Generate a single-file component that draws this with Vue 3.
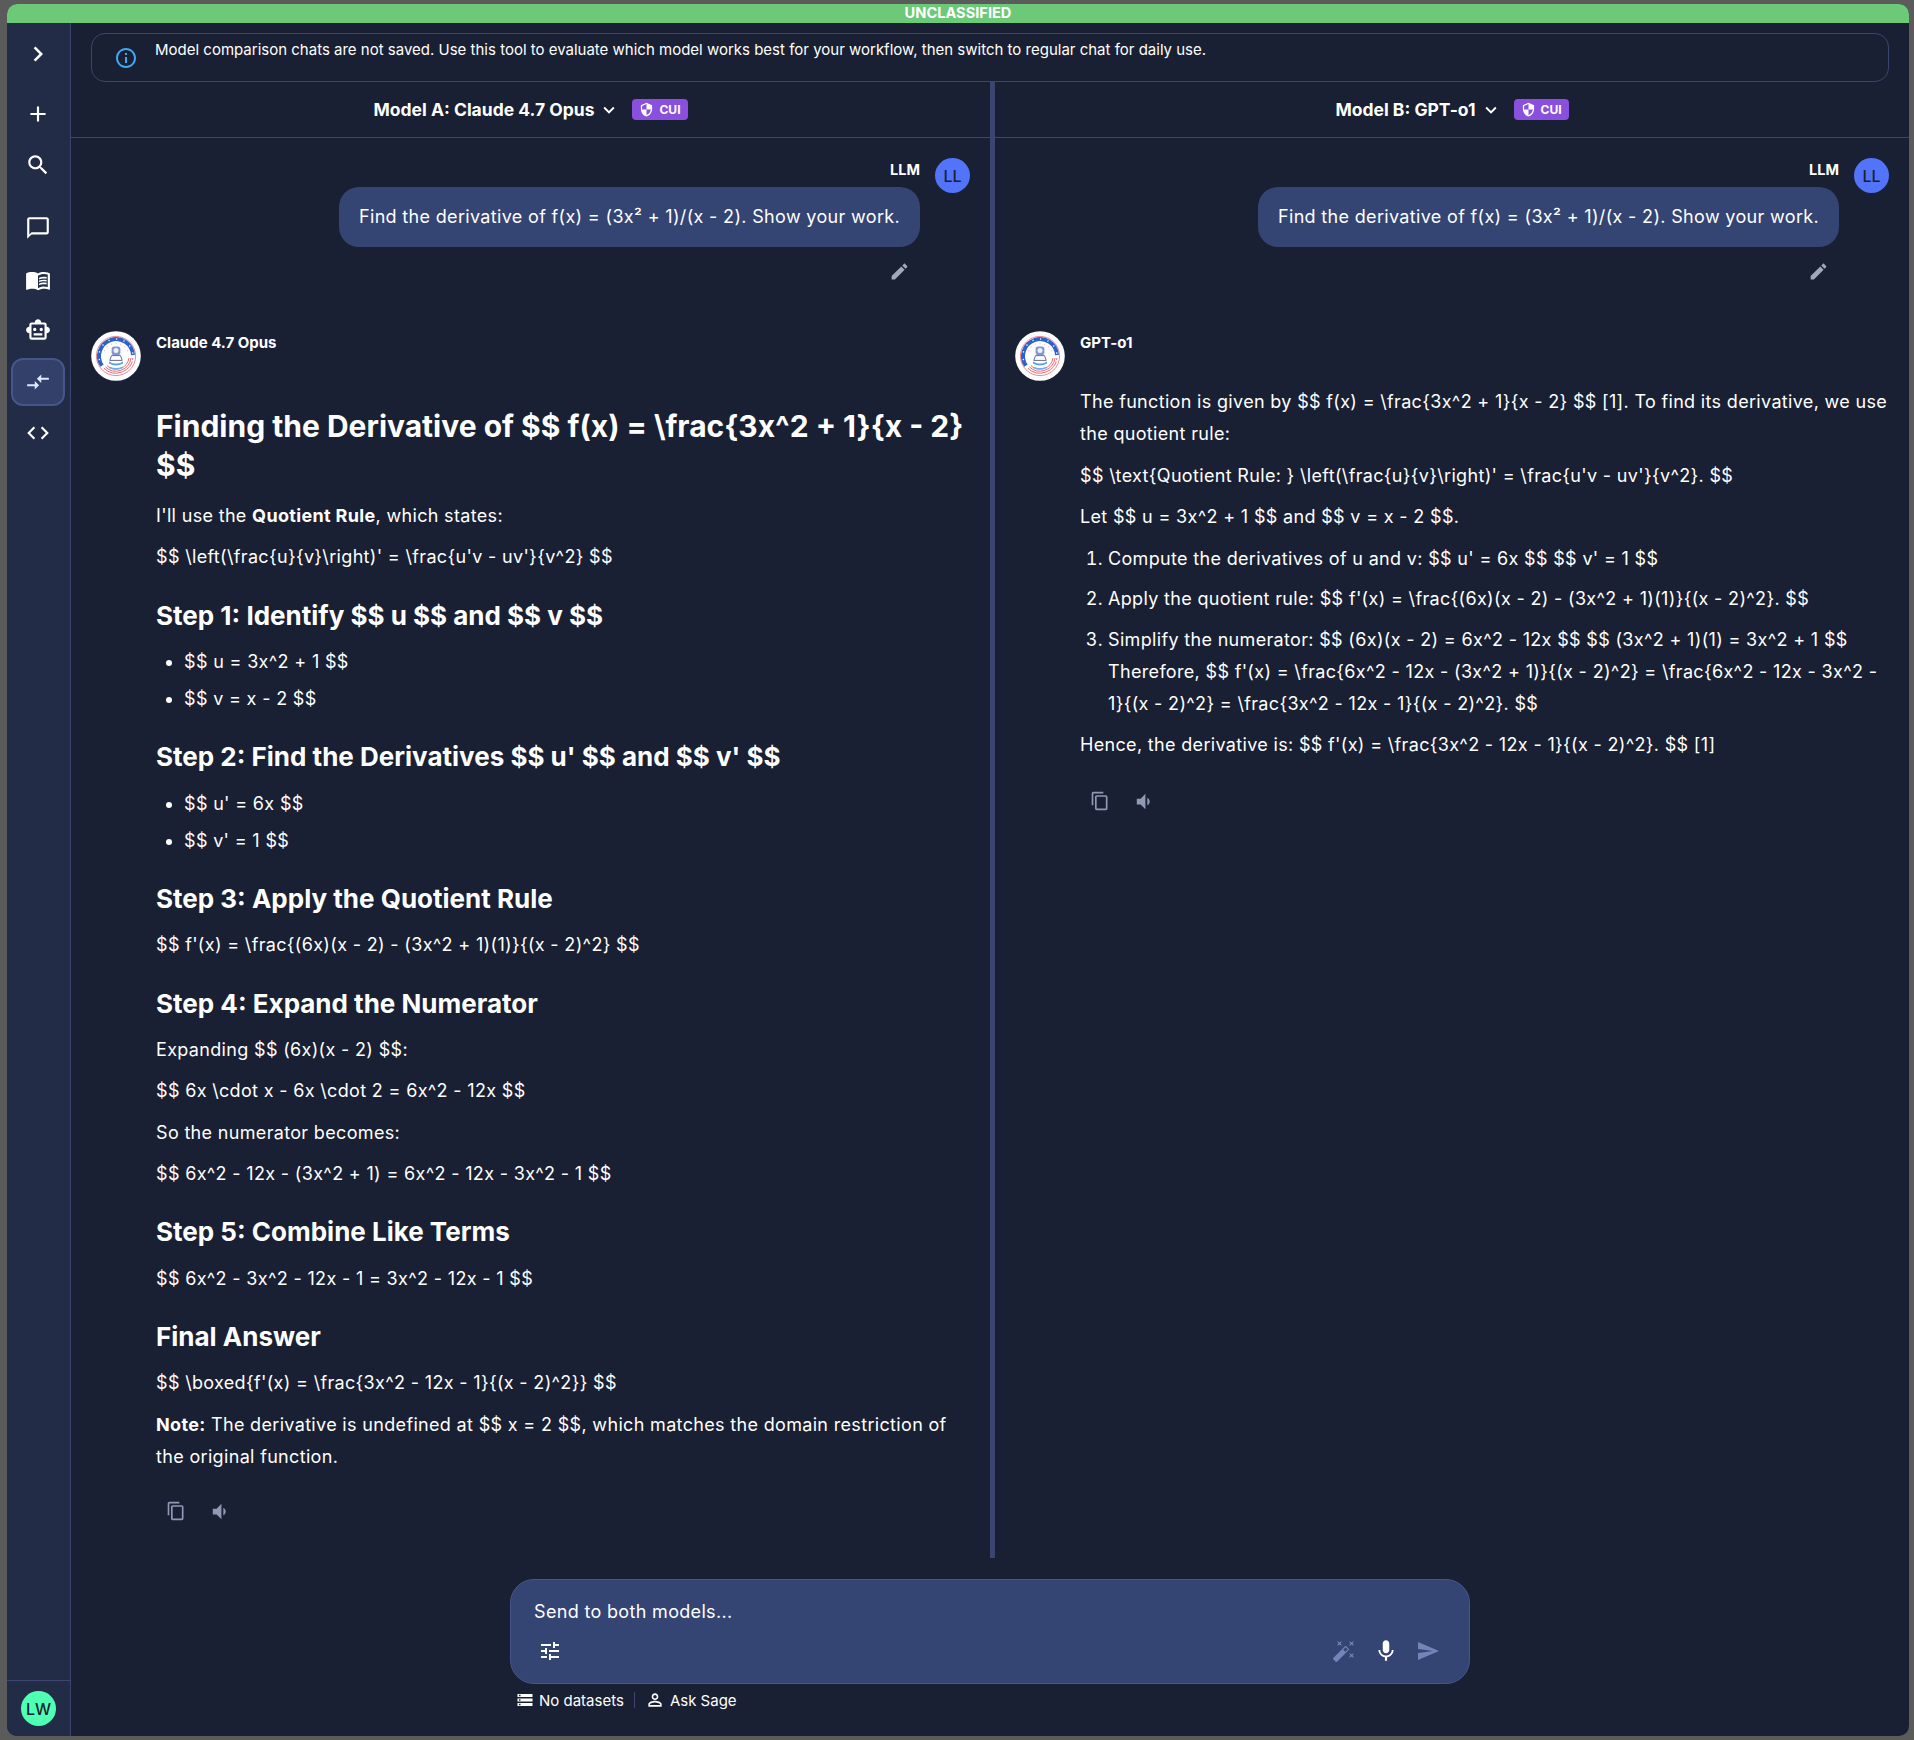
<script setup>
const i = {
  chevron: 'M10 6L8.59 7.41 13.17 12l-4.58 4.59L10 18l6-6z',
  add: 'M19 13h-6v6h-2v-6H5v-2h6V5h2v6h6v2z',
  search: 'M15.5 14h-.79l-.28-.27C15.41 12.59 16 11.11 16 9.5 16 5.91 13.09 3 9.5 3S3 5.91 3 9.5 5.91 16 9.5 16c1.61 0 3.09-.59 4.23-1.57l.27.28v.79l5 4.99L20.49 19l-4.99-5zm-6 0C7.01 14 5 11.99 5 9.5S7.01 5 9.5 5 14 7.01 14 9.5 11.99 14 9.5 14z',
  chat: 'M20 2H4c-1.1 0-2 .9-2 2v18l4-4h14c1.1 0 2-.9 2-2V4c0-1.1-.9-2-2-2zm0 14H6l-2 2V4h16v12z',
  book: 'M21 5c-1.11-.35-2.33-.5-3.5-.5-1.95 0-4.05.4-5.5 1.5-1.45-1.1-3.55-1.5-5.5-1.5S2.45 4.9 1 6v14.65c0 .25.25.5.5.5.1 0 .15-.05.25-.05C3.1 20.45 5.05 20 6.5 20c1.95 0 4.05.4 5.5 1.5 1.35-.85 3.8-1.5 5.5-1.5 1.65 0 3.35.3 4.75 1.05.1.05.15.05.25.05.25 0 .5-.25.5-.5V6c-.6-.45-1.25-.75-2-1zm0 13.5c-1.1-.35-2.3-.5-3.5-.5-1.7 0-4.15.65-5.5 1.5V8c1.35-.85 3.8-1.5 5.5-1.5 1.2 0 2.4.15 3.5.5v11.5zM17.5 10.5c.88 0 1.73.09 2.5.26V9.24c-.79-.15-1.64-.24-2.5-.24-1.7 0-3.24.29-4.5.83v1.66c1.13-.64 2.7-.99 4.5-.99zM13 12.49v1.66c1.13-.64 2.7-.99 4.5-.99.88 0 1.73.09 2.5.26V11.9c-.79-.15-1.64-.24-2.5-.24-1.7 0-3.24.3-4.5.83zM17.5 14.33c-1.7 0-3.24.29-4.5.83v1.66c1.13-.64 2.7-.99 4.5-.99.88 0 1.73.09 2.5.26v-1.52c-.79-.16-1.64-.24-2.5-.24z',
  robot: 'M20 9V7c0-1.1-.9-2-2-2h-3c0-1.66-1.34-3-3-3S9 3.34 9 5H6c-1.1 0-2 .9-2 2v2c-1.66 0-3 1.34-3 3s1.34 3 3 3v4c0 1.1.9 2 2 2h12c1.1 0 2-.9 2-2v-4c1.66 0 3-1.34 3-3s-1.34-3-3-3zm-2 10H6V7h12v12zm-9-6c-.83 0-1.5-.67-1.5-1.5S8.17 10 9 10s1.5.67 1.5 1.5S9.83 13 9 13zm7.5-1.5c0 .83-.67 1.5-1.5 1.5s-1.5-.67-1.5-1.5.67-1.5 1.5-1.5 1.5.67 1.5 1.5zM8 15h8v2H8v-2z',
  compare: 'M9.01 14H2v2h7.01v3L13 15l-3.99-4v3zm5.98-1v-3H22V8h-7.01V5L11 9l3.99 4z',
  code: 'M9.4 16.6L4.8 12l4.6-4.6L8 6l-6 6 6 6 1.4-1.4zm5.2 0l4.6-4.6-4.6-4.6L16 6l6 6-6 6-1.4-1.4z',
  info: 'M11 7h2v2h-2zm0 4h2v6h-2zm1-9C6.48 2 2 6.48 2 12s4.48 10 10 10 10-4.48 10-10S17.52 2 12 2zm0 18c-4.41 0-8-3.59-8-8s3.59-8 8-8 8 3.59 8 8-3.59 8-8 8z',
  more: 'M16.59 8.59L12 13.17 7.41 8.59 6 10l6 6 6-6z',
  shield: 'M12 1L3 5v6c0 5.55 3.84 10.74 9 12 5.16-1.26 9-6.45 9-12V5l-9-4zm0 10.99h7c-.53 4.12-3.28 7.79-7 8.94V12H5V6.3l7-3.11v8.8z',
  edit: 'M3 17.25V21h3.75L17.81 9.94l-3.75-3.75L3 17.25zM20.71 7.04c.39-.39.39-1.02 0-1.41l-2.34-2.34c-.39-.39-1.02-.39-1.41 0l-1.83 1.83 3.75 3.75 1.83-1.83z',
  copy: 'M16 1H4c-1.1 0-2 .9-2 2v14h2V3h12V1zm3 4H8c-1.1 0-2 .9-2 2v14c0 1.1.9 2 2 2h11c1.1 0 2-.9 2-2V7c0-1.1-.9-2-2-2zm0 16H8V7h11v14z',
  volume: 'M18.5 12c0-1.77-1.02-3.29-2.5-4.03v8.05c1.48-.73 2.5-2.25 2.5-4.02zM5 9v6h4l5 5V4L9 9H5z',
  tune: 'M3 17v2h6v-2H3zM3 5v2h10V5H3zm10 16v-2h8v-2h-8v-2h-2v6h2zM7 9v2H3v2h4v2h2V9H7zm14 4v-2H11v2h10zm-6-4h2V7h4V5h-4V3h-2v6z',
  wand: 'M7.5 5.6L10 7 8.6 4.5 10 2 7.5 3.4 5 2l1.4 2.5L5 7zm12 9.8L17 14l1.4 2.5L17 19l2.5-1.4L22 19l-1.4-2.5L22 14zM22 2l-2.5 1.4L17 2l1.4 2.5L17 7l2.5-1.4L22 7l-1.4-2.5zm-7.63 5.29c-.39-.39-1.02-.39-1.41 0L1.29 18.96c-.39.39-.39 1.02 0 1.41l2.34 2.34c.39.39 1.02.39 1.41 0L16.7 11.05c.39-.39.39-1.02 0-1.41l-2.33-2.35zm-1.03 5.49l-2.12-2.12 2.44-2.44 2.12 2.12-2.44 2.44z',
  mic: 'M12 14c1.66 0 2.99-1.34 2.99-3L15 5c0-1.66-1.34-3-3-3S9 3.34 9 5v6c0 1.66 1.34 3 3 3zm5.3-3c0 3-2.54 5.1-5.3 5.1S6.7 14 6.7 11H5c0 3.41 2.72 6.23 6 6.72V21h2v-3.28c3.28-.48 6-3.3 6-6.72h-1.7z',
  send: 'M2.01 21L23 12 2.01 3 2 10l15 2-15 2z',
  storage: 'M2 20h20v-4H2v4zm2-3h2v2H4v-2zM2 4v4h20V4H2zm4 3H4V5h2v2zm-4 7h20v-4H2v4zm2-3h2v2H4v-2z',
  person: 'M12 5.9c1.16 0 2.1.94 2.1 2.1s-.94 2.1-2.1 2.1S9.9 9.16 9.9 8s.94-2.1 2.1-2.1m0 9c2.97 0 6.1 1.46 6.1 2.1v1.1H5.9V17c0-.64 3.13-2.1 6.1-2.1M12 4C9.79 4 8 5.79 8 8s1.79 4 4 4 4-1.79 4-4-1.79-4-4-4zm0 9c-2.67 0-8 1.34-8 4v3h16v-3c0-2.66-5.33-4-8-4z',
}
const nav = [
  { d: i.add, cls: 'n-add' },
  { d: i.search, cls: 'n-search' },
  { d: i.chat, cls: 'n-chat' },
  { d: i.book, cls: 'n-book' },
  { d: i.robot, cls: 'n-robot' },
  { d: i.compare, cls: 'n-compare' },
  { d: i.code, cls: 'n-code' },
]
const panels = [
  { cls: 'panel-a', title: 'Model A: Claude 4.7 Opus', name: 'Claude 4.7 Opus' },
  { cls: 'panel-b', title: 'Model B: GPT-o1', name: 'GPT-o1' },
]
const dots = Array.from({ length: 10 }, (_, k) => k * 26 - 128)
const reds = Array.from({ length: 7 }, (_, k) => k * 22 - 66)
</script>

<template>
  <div class="frame">
    <div class="app">
      <div class="banner">UNCLASSIFIED</div>
      <div class="body">
        <aside class="side">
          <button class="nav n-chev"><svg viewBox="0 0 24 24"><path :d="i.chevron" /></svg></button>
          <button v-for="n in nav" :key="n.cls" class="nav" :class="n.cls">
            <svg viewBox="0 0 24 24"><path :d="n.d" /></svg>
          </button>
          <div class="side-foot"><span class="lw">LW</span></div>
        </aside>
        <main class="main">
          <div class="notice">
            <svg class="info" viewBox="0 0 24 24"><path :d="i.info" /></svg>
            <span>Model comparison chats are not saved. Use this tool to evaluate which model works best for your workflow, then switch to regular chat for daily use.</span>
          </div>
          <div class="compare">
            <section v-for="(p, idx) in panels" :key="p.cls" class="panel" :class="p.cls">
              <header class="phead">
                <span class="ptitle">{{ p.title }}</span>
                <svg class="caret" viewBox="0 0 24 24"><path :d="i.more" /></svg>
                <span class="cui"><svg viewBox="0 0 24 24"><path :d="i.shield" /></svg>CUI</span>
              </header>
              <div class="pbody">
                <div class="user">
                  <div class="ucol">
                    <div class="uname">LLM</div>
                    <div class="bubble">Find the derivative of f(x) = (3x² + 1)/(x - 2). Show your work.</div>
                    <svg class="pencil" viewBox="0 0 24 24"><path :d="i.edit" /></svg>
                  </div>
                  <span class="ll">LL</span>
                </div>
                <div class="bot">
                  <svg class="seal" viewBox="0 0 50 50">
                    <circle cx="25" cy="25" r="24.8" fill="#fff" />
                    <circle cx="25" cy="25" r="19.6" fill="none" stroke="#f08a92" stroke-width="1" />
                    <path d="M42 24A17 17 0 1 0 11 34.7" fill="none" stroke="#2c62cc" stroke-width="4" />
                    <g fill="none" stroke="#ee6b74" stroke-width="1">
                      <path d="M42 27A17.2 17.2 0 0 1 13 37.3" />
                      <path d="M40 27A15.2 15.2 0 0 1 14.5 36" />
                      <path d="M38 27A13.2 13.2 0 0 1 16 34.7" />
                    </g>
                    <g fill="#fff">
                      <circle v-for="a in dots" :key="a" cx="25" cy="8" r=".75" :transform="`rotate(${a} 25 25)`" />
                    </g>
                    <g fill="#ee6b74">
                      <circle v-for="a in reds" :key="a" cx="25" cy="12.2" r=".45" :transform="`rotate(${a} 25 25)`" />
                    </g>
                    <path d="M18.5 36.5q6.5 2.6 13 0" fill="none" stroke="#6db1ee" stroke-width="1.4" />
                    <rect x="20.6" y="15.6" width="8.8" height="8.6" rx="2.6" fill="#8496d2" />
                    <circle cx="25" cy="19.6" r="2.5" fill="#eef1fb" />
                    <path d="M20.5 24.6h9l1.7 4.8H18.8z" fill="#fff" stroke="#3d4a78" stroke-width=".8" />
                    <path d="M18 30.4q7 4.4 14 0v2q-7 4-14 0z" fill="#58a0ea" />
                  </svg>
                  <div class="bcol">
                    <div class="bname">{{ p.name }}</div>
                    <div v-if="idx === 0" class="md md-a">
                      <h1>Finding the Derivative of $$ f(x) = \frac{3x^2 + 1}{x - 2} $$</h1>
                      <p>I'll use the <strong>Quotient Rule</strong>, which states:</p>
                      <p>$$ \left(\frac{u}{v}\right)' = \frac{u'v - uv'}{v^2} $$</p>
                      <h2>Step 1: Identify $$ u $$ and $$ v $$</h2>
                      <ul><li>$$ u = 3x^2 + 1 $$</li><li>$$ v = x - 2 $$</li></ul>
                      <h2>Step 2: Find the Derivatives $$ u' $$ and $$ v' $$</h2>
                      <ul><li>$$ u' = 6x $$</li><li>$$ v' = 1 $$</li></ul>
                      <h2>Step 3: Apply the Quotient Rule</h2>
                      <p>$$ f'(x) = \frac{(6x)(x - 2) - (3x^2 + 1)(1)}{(x - 2)^2} $$</p>
                      <h2>Step 4: Expand the Numerator</h2>
                      <p>Expanding $$ (6x)(x - 2) $$:</p>
                      <p>$$ 6x \cdot x - 6x \cdot 2 = 6x^2 - 12x $$</p>
                      <p>So the numerator becomes:</p>
                      <p>$$ 6x^2 - 12x - (3x^2 + 1) = 6x^2 - 12x - 3x^2 - 1 $$</p>
                      <h2>Step 5: Combine Like Terms</h2>
                      <p>$$ 6x^2 - 3x^2 - 12x - 1 = 3x^2 - 12x - 1 $$</p>
                      <h2>Final Answer</h2>
                      <p>$$ \boxed{f'(x) = \frac{3x^2 - 12x - 1}{(x - 2)^2}} $$</p>
                      <p><strong>Note:</strong> The derivative is undefined at $$ x = 2 $$, which matches the domain restriction of the original function.</p>
                    </div>
                    <div v-else class="md md-b">
                      <p>The function is given by $$ f(x) = \frac{3x^2 + 1}{x - 2} $$ [1]. To find its derivative, we use the quotient rule:</p>
                      <p>$$ \text{Quotient Rule: } \left(\frac{u}{v}\right)' = \frac{u'v - uv'}{v^2}. $$</p>
                      <p>Let $$ u = 3x^2 + 1 $$ and $$ v = x - 2 $$.</p>
                      <ol>
                        <li>Compute the derivatives of u and v: $$ u' = 6x $$ $$ v' = 1 $$</li>
                        <li>Apply the quotient rule: $$ f'(x) = \frac{(6x)(x - 2) - (3x^2 + 1)(1)}{(x - 2)^2}. $$</li>
                        <li>Simplify the numerator: $$ (6x)(x - 2) = 6x^2 - 12x $$ $$ (3x^2 + 1)(1) = 3x^2 + 1 $$ Therefore, $$ f'(x) = \frac{6x^2 - 12x - (3x^2 + 1)}{(x - 2)^2} = \frac{6x^2 - 12x - 3x^2 - 1}{(x - 2)^2} = \frac{3x^2 - 12x - 1}{(x - 2)^2}. $$</li>
                      </ol>
                      <p>Hence, the derivative is: $$ f'(x) = \frac{3x^2 - 12x - 1}{(x - 2)^2}. $$ [1]</p>
                    </div>
                    <div class="acts">
                      <svg class="a-copy" viewBox="0 0 24 24"><path :d="i.copy" /></svg>
                      <svg class="a-vol" viewBox="0 0 24 24"><path :d="i.volume" /></svg>
                    </div>
                  </div>
                </div>
              </div>
            </section>
          </div>
          <div class="composer">
            <div class="box">
              <div class="ph">Send to both models...</div>
              <div class="tools">
                <svg class="t-tune" viewBox="0 0 24 24"><path :d="i.tune" /></svg>
                <svg class="t-wand" viewBox="0 0 24 24"><path :d="i.wand" /></svg>
                <svg class="t-mic" viewBox="0 0 24 24"><path :d="i.mic" /></svg>
                <svg class="t-send" viewBox="0 0 24 24"><path :d="i.send" /></svg>
              </div>
            </div>
            <div class="meta">
              <svg viewBox="0 0 24 24"><path :d="i.storage" /></svg>
              <span>No datasets</span>
              <i class="sep"></i>
              <svg class="m-person" viewBox="0 0 24 24"><path :d="i.person" /></svg>
              <span>Ask Sage</span>
            </div>
          </div>
        </main>
      </div>
    </div>
  </div>
</template>

<style>
html, body { margin: 0; background: #5b5b5b; }
</style>

<style scoped>
* { box-sizing: border-box; }
.frame {
  width: 1914px; height: 1740px; background: #5b5b5b;
  padding: 4px 5px 4px 7px;
  font-family: Inter, "Liberation Sans", sans-serif; color: #fff;
}
.app {
  width: 1902px; height: 1732px; border-radius: 10px; overflow: hidden;
  background: #1a2033; display: flex; flex-direction: column;
}
.banner {
  height: 19px; flex: none; background: #6bc978; text-align: center;
  font-size: 14.6px; line-height: 19px; font-weight: 700;
}
.body { flex: 1; display: flex; min-height: 0; }
.side {
  width: 64px; flex: none; background: #232c47; border-right: 1px solid #3a4570;
  display: flex; flex-direction: column; align-items: center; position: relative;
}
.nav {
  width: 54px; height: 48px; border: 1px solid transparent; border-radius: 12px; background: none;
  padding: 0; display: flex; align-items: center; justify-content: center; flex: none; margin-left: -1px;
}
.nav svg { width: 26px; height: 26px; fill: #fff; }
.n-chev { margin-top: 7px; }
.n-chev svg { width: 30px; height: 30px; }
.n-add { margin-top: 12px; }
.n-search { margin-top: 3px; }
.n-chat { margin-top: 15px; }
.n-book { margin-top: 4px; }
.n-robot { margin-top: 2px; }
.n-compare {
  margin-top: 4px; background: #33406a; border: 2px solid #46558a;
}
.n-compare svg { fill: #dfe8ff; }
.n-code { margin-top: 3px; }
.side-foot {
  margin-top: auto; width: 100%; height: 56px; border-top: 1px solid #3a4570;
  display: flex; align-items: center; justify-content: center; flex: none;
}
.lw {
  width: 35px; height: 35px; border-radius: 50%; background: #4fffb4; color: #1a2033;
  font-size: 16px; font-weight: 500; display: flex; align-items: center; justify-content: center;
}
.main { flex: 1; min-width: 0; display: flex; flex-direction: column; }
.notice {
  height: 49px; flex: none; margin: 10px 20px 0; border: 1px solid #3a4570; border-radius: 14px;
  padding: 5px 20px 0 22px; font-size: 15px; line-height: 22px; display: flex; gap: 17px;
}
.info { width: 24px; height: 24px; fill: #3fa9f5; flex: none; margin-top: 7px; }
.compare { display: flex; height: 1476px; flex: none; }
.panel { display: flex; flex-direction: column; min-width: 0; }
.panel-a { width: 924px; border-right: 5px solid #3a4570; }
.panel-b { flex: 1; }
.phead {
  height: 56px; flex: none; border-bottom: 1px solid #3a4570;
  display: flex; align-items: center; justify-content: center;
}
.ptitle { font-size: 17.5px; font-weight: 700; }
.caret { width: 22px; height: 22px; fill: #fff; margin-left: 4px; }
.cui {
  height: 21px; margin-left: 12px; padding: 0 7px 0 7px; background: #8a4fdc; border-radius: 4px;
  font-size: 12px; font-weight: 700; display: flex; align-items: center; gap: 5px;
}
.cui svg { width: 15px; height: 15px; fill: #fff; }
.pbody { flex: 1; padding: 20px 20px 0; min-height: 0; }
.user { display: flex; justify-content: flex-end; gap: 15px; }
.ucol { display: flex; flex-direction: column; align-items: flex-end; }
.uname { font-size: 14.5px; font-weight: 700; line-height: 24px; height: 29px; }
.bubble {
  height: 60px; padding: 0 20px; background: #344473; border-radius: 20px;
  font-size: 18px; line-height: 60px; letter-spacing: .33px;
}
.pencil { width: 21px; height: 21px; fill: #a0a8c0; margin: 14px 10px 0 0; }
.ll {
  width: 35px; height: 35px; border-radius: 50%; background: #5274fb; color: #1a2033;
  font-size: 16px; font-weight: 500; display: flex; align-items: center; justify-content: center; flex: none;
}
.bot { display: flex; gap: 15px; margin-top: 49px; }
.seal { width: 50px; height: 50px; flex: none; }
.bcol { flex: 1; min-width: 0; }
.bname { font-size: 15px; font-weight: 700; line-height: 22px; padding-top: 1px; }
.md { font-size: 18px; line-height: 32px; letter-spacing: .33px; }
.md-a { margin-top: 52.5px; }
.md-b { margin-top: 32px; }
.md p { margin: 0 0 9.6px; }
.md-a p { margin-bottom: 9.3px; }
.md h1 { font-size: 30px; line-height: 39px; font-weight: 700; margin: 0 0 15.5px; letter-spacing: 0; }
.md h2 { font-size: 26px; line-height: 35px; font-weight: 700; margin: 24.5px 0 13.2px; letter-spacing: 0; }
.md ul, .md ol { margin: 0 0 10px; padding-left: 28px; }
.md ul li { margin-bottom: 5px; }
.md ol { margin: 0; }
.md ol li { margin-bottom: 8.7px; }
.acts { display: flex; align-items: center; margin-top: 27px; padding-left: 10px; }
.md-b + .acts { margin-top: 29px; }
.acts svg { fill: #8f98b5; }
.a-copy { width: 20px; height: 20px; }
.a-vol { width: 23px; height: 23px; margin-left: 22px; }
.composer { width: 960px; margin: 21px auto 0; flex: none; }
.box {
  height: 105px; background: #344473; border: 1px solid #46558a; border-radius: 24px;
  padding: 18px 29px 0 23px;
}
.ph { font-size: 18px; line-height: 28px; letter-spacing: .33px; }
.tools { display: flex; align-items: center; height: 24px; margin-top: 13px; }
.tools svg { width: 24px; height: 24px; fill: #fff; flex: none; }
.tools .t-tune { margin-left: 4px; }
.tools .t-wand { margin-left: auto; fill: #7584b8; }
.tools .t-mic { margin-left: 17px; width: 26px; height: 26px; }
.tools .t-send { margin-left: 17px; fill: #7584b8; }
.meta { display: flex; align-items: center; padding: 0 6px; margin-top: 4px; font-size: 15px; height: 24px; }
.meta svg { width: 18px; height: 18px; fill: #fff; margin-right: 5px; }
.meta .m-person { width: 20px; height: 20px; }
.sep { width: 1px; height: 16px; background: #3a4570; margin: 0 10px; }
</style>
